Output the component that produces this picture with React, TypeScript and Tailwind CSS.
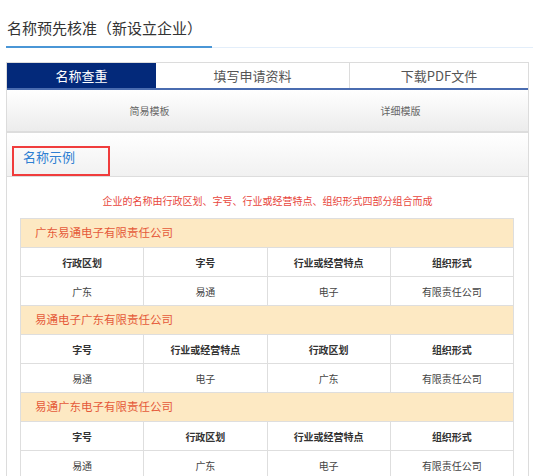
const font = { fontFamily: '"Noto Sans CJK SC", "Noto Sans", sans-serif' }

const examples = [
  {
    name: "广东易通电子有限责任公司",
    cols: [
      ["行政区划", "广东"],
      ["字号", "易通"],
      ["行业或经营特点", "电子"],
      ["组织形式", "有限责任公司"],
    ],
  },
  {
    name: "易通电子广东有限责任公司",
    cols: [
      ["字号", "易通"],
      ["行业或经营特点", "电子"],
      ["行政区划", "广东"],
      ["组织形式", "有限责任公司"],
    ],
  },
  {
    name: "易通广东电子有限责任公司",
    cols: [
      ["字号", "易通"],
      ["行政区划", "广东"],
      ["行业或经营特点", "电子"],
      ["组织形式", "有限责任公司"],
    ],
  },
]

export default function App() {
  return (
    <div className="w-[535px] h-[476px] overflow-hidden bg-white" style={font}>
      {/* Page title */}
      <div className="pt-[18px] pl-[7px]">
        <h1 className="text-[15px] leading-[20px] text-[#333]">名称预先核准（新设立企业）</h1>
      </div>
      <div className="mt-[8px] ml-[6px] mr-[2px] flex items-end h-[2px]">
        <div className="w-[206px] h-[2px] bg-[#4a96d6]"></div>
        <div className="flex-1 h-px bg-[#e3eefa]"></div>
      </div>

      {/* Main panel */}
      <div className="mt-[14px] ml-[6px] w-[523px] border border-[#dcdcdc]">
        {/* Tabs */}
        <div className="flex h-[27px] border-b-2 border-[#4a6cb0]">
          <div className="w-[149px] bg-[#03297a] text-white text-[13px] flex items-center justify-center">名称查重</div>
          <div className="w-[194px] border-r border-[#dcdcdc] text-[#555] text-[13px] flex items-center justify-center">填写申请资料</div>
          <div className="flex-1 text-[#555] text-[13px] flex items-center justify-center">下载PDF文件</div>
        </div>

        {/* Template switch */}
        <div className="h-[43px] flex items-center bg-gradient-to-b from-white to-[#ececec] border-b-2 border-[#dddddd]">
          <span className="ml-[17px] w-[251px] text-center text-[10px] text-[#666]">简易模板</span>
          <span className="w-[251px] text-center text-[10px] text-[#666]">详细模版</span>
        </div>

        {/* Example header */}
        <div className="h-[44px] pt-[13px] bg-gradient-to-b from-white to-[#f1f1f1] border-b border-[#dddddd]">
          <div className="ml-[5px] w-[98px] h-[30px] border-2 border-[#f03c3c] pl-[9px] pt-px">
            <span className="block text-[13px] leading-[16px] text-[#2e7fd2]">名称示例</span>
          </div>
        </div>

        {/* Body */}
        <div className="pt-[16px] pb-[20px]">
          <p className="text-center text-[10px] leading-[16px] text-[#e8463c]">企业的名称由行政区划、字号、行业或经营特点、组织形式四部分组合而成</p>
          <table className="mt-[9px] ml-[13px] w-[494px] border-collapse table-fixed">
            <tbody>
              {examples.map((ex) => (
                <>
                  <tr key={ex.name + "-h"}>
                    <td colSpan={4} className="h-[29px] border border-[#dedede] bg-[#fde9c3] pl-[14px] text-[11.5px] text-[#e55a3a]">
                      {ex.name}
                    </td>
                  </tr>
                  <tr key={ex.name + "-t"}>
                    {ex.cols.map((c) => (
                      <td key={c[0]} className="h-[29px] border border-[#dedede] text-center text-[10px] font-bold text-[#333]">
                        {c[0]}
                      </td>
                    ))}
                  </tr>
                  <tr key={ex.name + "-d"}>
                    {ex.cols.map((c) => (
                      <td key={c[0]} className="h-[29px] border border-[#dedede] text-center text-[10px] text-[#444]">
                        {c[1]}
                      </td>
                    ))}
                  </tr>
                </>
              ))}
            </tbody>
          </table>
        </div>
      </div>
    </div>
  )
}
